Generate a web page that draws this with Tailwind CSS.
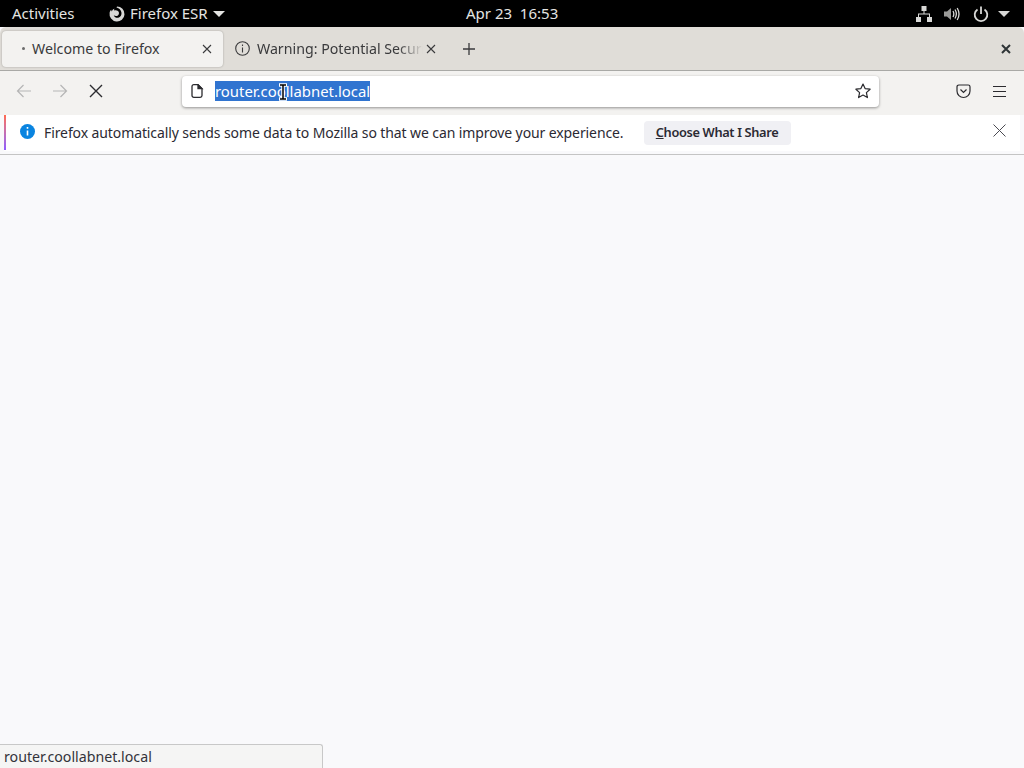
<!DOCTYPE html>
<html lang="en">
<head>
    <meta charset="UTF-8">
    <title>Welcome to Firefox</title>
    <script src="https://cdn.jsdelivr.net/npm/@tailwindcss/browser@4"></script>
</head>
<body class="bg-[#f9f9fb] font-['Noto_Sans',sans-serif] overflow-hidden">
<div class="relative w-[1024px] h-[768px] flex flex-col">

    <!-- GNOME top bar -->
    <div class="h-[27px] bg-black text-[#e4e4e2] text-[15px] flex items-center justify-between pl-3 pr-[14px]">
        <div class="flex items-center">
            <span class="w-[97px]">Activities</span>
            <svg class="w-[18px] h-[18px] mr-[4px] -ml-[1px]" viewBox="0 0 18 18"><path fill="#d8d8d6" d="M9 1.500a7.500 7.500 0 1 1-7.400 6.300c.3-1.400.9-2.300 1.600-3 0 .8.3 1.300.7 1.600C4.300 4.700 5.600 3.800 6.500 3.700 6 4.300 5.900 5 6.100 5.500 7 5 8.800 5 10 6c1.400 1.200 1.300 3.300-.1 4.400-1.300 1-3.100.7-4.100-.2.300 1.700 2.300 3 4.400 2.500 2.400-.6 3.800-3 3.200-5.400C13 5 11.200 3 8.500 2.400 9 2 9 1.500 9 1.500z"/></svg>
            <span>Firefox ESR</span>
            <span class="ml-[5px] w-0 h-0 border-l-[6px] border-r-[6px] border-t-[6px] border-l-transparent border-r-transparent border-t-[#e4e4e2]"></span>
        </div>
        <span class="absolute left-[466px]">Apr 23&nbsp; 16:53</span>
        <div class="flex items-center">
            <svg class="w-[16px] h-[16px] mr-[12px]" viewBox="0 0 16 16" fill="#d8d8d6"><path d="M5.500 0h5v5h-5zM0 11h5v5H0zM11 11h5v5h-5z"/><path d="M7.500 5h1v2.500H14V11h-1V8.500H3V11H2V7.500h5.500z"/></svg>
            <svg class="w-[16px] h-[16px] mr-[13px]" viewBox="0 0 16 16" fill="none"><path fill="#9a9a98" d="M0 5.500h3L7 2v12l-4-3.500H0z"/><path stroke="#d8d8d6" stroke-width="1.300" d="M9 5c1 1.800 1 4.200 0 6M11 3.500c1.700 2.800 1.700 6.200 0 9M13.200 2c2.300 3.800 2.300 8.200 0 12"/></svg>
            <svg class="w-[16px] h-[16px] mr-[9px]" viewBox="0 0 16 16" fill="none" stroke="#d8d8d6" stroke-width="1.800"><path d="M4.500 3.500a6.300 6.300 0 1 0 7 0"/><path d="M8 0.500v7.500"/></svg>
            <span class="w-0 h-0 border-l-[6px] border-r-[6px] border-t-[6px] border-l-transparent border-r-transparent border-t-[#d8d8d6]"></span>
        </div>
    </div>

    <!-- Tab strip -->
    <div class="h-[44px] bg-[#e0ddd8] rounded-t-[6px] border-b border-[#a9a9a6] flex items-center pl-[2px] text-[14.200px] leading-[22px] text-[#3a3a3c]">
        <div class="w-[221px] h-[36px] bg-[#f3f2f0] rounded-[4px] shadow-[0_0_2px_rgba(0,0,0,0.3)] flex items-center pl-[20px] pr-[11px]">
            <span class="w-[3px] h-[3px] rounded-full bg-[#6b6b6b] mr-[7px]"></span>
            <span class="flex-1 pt-[1px]">Welcome to Firefox</span>
            <svg class="w-[10px] h-[10px]" viewBox="0 0 10 10" stroke="#3a3a3c" stroke-width="1.100"><path d="M1 1l8 8M9 1l-8 8"/></svg>
        </div>
        <div class="w-[225px] h-[36px] flex items-center pl-[12px] pr-[12px]">
            <svg class="w-[15px] h-[15px] mr-[7px] shrink-0" viewBox="0 0 15 15" fill="none" stroke="#3a3a3c" stroke-width="1.100"><circle cx="7.500" cy="7.500" r="6.800"/><path d="M7.500 6.500v5M7.500 3.500v1.500"/></svg>
            <span class="w-[166px] pt-[1px] overflow-hidden whitespace-nowrap [mask-image:linear-gradient(to_right,black_85%,transparent)]">Warning: Potential Security Risk Ahead</span>
            <svg class="w-[10px] h-[10px] ml-auto" viewBox="0 0 10 10" stroke="#3a3a3c" stroke-width="1.100"><path d="M1 1l8 8M9 1l-8 8"/></svg>
        </div>
        <svg class="w-[14px] h-[14px] ml-[14px]" viewBox="0 0 14 14" stroke="#3a3a3c" stroke-width="1.300"><path d="M7 1v12M1 7h12"/></svg>
        <svg class="w-[10px] h-[10px] ml-auto mr-[13px]" viewBox="0 0 10 10" stroke="#2e3436" stroke-width="2"><path d="M1 1l8 8M9 1l-8 8"/></svg>
    </div>

    <!-- Navigation toolbar -->
    <div class="h-[44px] bg-[#f3f2f0] flex items-center pb-[4px]">
        <svg class="w-[16px] h-[16px] ml-[16px]" viewBox="0 0 16 16" fill="none" stroke="#b5b5b5" stroke-width="1.200"><path d="M15 8H1.500M7.500 2l-6 6 6 6"/></svg>
        <svg class="w-[16px] h-[16px] ml-[20px]" viewBox="0 0 16 16" fill="none" stroke="#b5b5b5" stroke-width="1.200"><path d="M1 8h13.500M8.500 2l6 6-6 6"/></svg>
        <svg class="w-[14px] h-[14px] ml-[21px]" viewBox="0 0 14 14" stroke="#2b2b2f" stroke-width="1.400"><path d="M1 1l12 12M13 1L1 13"/></svg>
        <div class="ml-[79px] w-[697px] h-[31px] bg-white rounded-[4px] shadow-[0_1px_3px_rgba(0,0,0,0.4)] flex items-center pl-[8px] pr-[8px]">
            <svg class="w-[14px] h-[14px] mr-[11px]" viewBox="0 0 14 14" fill="none" stroke="#2b2b2f" stroke-width="1.300"><path d="M2 2.500A1.800 1.800 0 0 1 3.800.7H8L12 4.700v6.800a1.800 1.800 0 0 1-1.800 1.800H3.800A1.800 1.800 0 0 1 2 11.500z"/><path fill="#2b2b2f" d="M8 .7V4.700h4z"/></svg>
            <span class="bg-[#3074d0] text-white text-[14.900px] h-[20px] leading-[20px]">router.coollabnet.local</span>
            <svg class="w-[16px] h-[16px] ml-auto" viewBox="0 0 16 16" fill="none" stroke="#2b2b2f" stroke-width="1.200" stroke-linejoin="round"><path d="M8 1l2.100 4.600 5 .6-3.700 3.400 1 5L8 12.100l-4.400 2.500 1-5L.9 6.200l5-.6z"/></svg>
        </div>
        <svg class="w-[15px] h-[15px] ml-[77px]" viewBox="0 0 15 15" fill="none" stroke="#2b2b2f" stroke-width="1.200"><path d="M1 2.800A1.800 1.800 0 0 1 2.800 1h9.400A1.800 1.800 0 0 1 14 2.800V7a6.500 6.500 0 0 1-13 0z"/><path d="M4.500 5.500l3 3 3-3"/></svg>
        <svg class="w-[13px] h-[13px] ml-[22px]" viewBox="0 0 13 13" stroke="#2b2b2f" stroke-width="1.200"><path d="M0 1.500h13M0 6.500h13M0 11.500h13"/></svg>
    </div>

    <!-- Notification bar -->
    <div class="h-[40px] bg-[#f9f9fb] border-b border-[#c4c4c4]">
        <div class="h-[36px] ml-[4px] mr-[4px] bg-white flex items-center relative text-[#2b2a33] text-[14px] tracking-[-0.1px]">
            <span class="absolute left-0 top-0 w-[2px] h-[35px] bg-gradient-to-b from-[#ff6a4d] to-[#9059ff]"></span>
            <svg class="w-[15px] h-[15px] ml-[16px] mr-[9px] -mt-[4px]" viewBox="0 0 15 15"><circle cx="7.500" cy="7.500" r="7.500" fill="#0a84e0"/><path stroke="#fff" stroke-width="1.600" d="M7.500 6.500v5M7.500 3v1.800"/></svg>
            <span class="-mt-[2px]">Firefox automatically sends some data to Mozilla so that we can improve your experience.</span>
            <div class="ml-[20px] w-[147px] h-[24px] bg-[#f0f0f4] rounded-[4px] flex items-center justify-center font-semibold text-[12.800px] tracking-[-0.35px]"><span><span class="underline">C</span>hoose What I Share</span></div>
            <svg class="w-[13px] h-[13px] absolute left-[989px] top-[9px]" viewBox="0 0 13 13" stroke="#4a4a52" stroke-width="1"><path d="M.5.500l12 12M12.500.500l-12 12"/></svg>
        </div>
    </div>

    <!-- Page content -->
    <div class="flex-1 bg-[#f9f9fb]"></div>

    <!-- Status panel -->
    <div class="absolute left-0 bottom-0 w-[323px] h-[24px] bg-[#f5f5f4] border-t border-r border-[#c8c8c8] rounded-tr-[3px] pl-[4px] text-[14.200px] leading-[24px] text-[#33333a]">router.coollabnet.local</div>

    <!-- I-beam mouse pointer -->
    <svg class="absolute left-[278px] top-[83px] w-[10px] h-[18px]" viewBox="0 0 10 18" fill="none"><path stroke="#fff" stroke-width="3.500" d="M1 2h8M1 16h8M5 2v14"/><path stroke="#000" stroke-width="1.500" d="M2 2h6M2 16h6M5 2v14"/></svg>
</div>
</body>
</html>
